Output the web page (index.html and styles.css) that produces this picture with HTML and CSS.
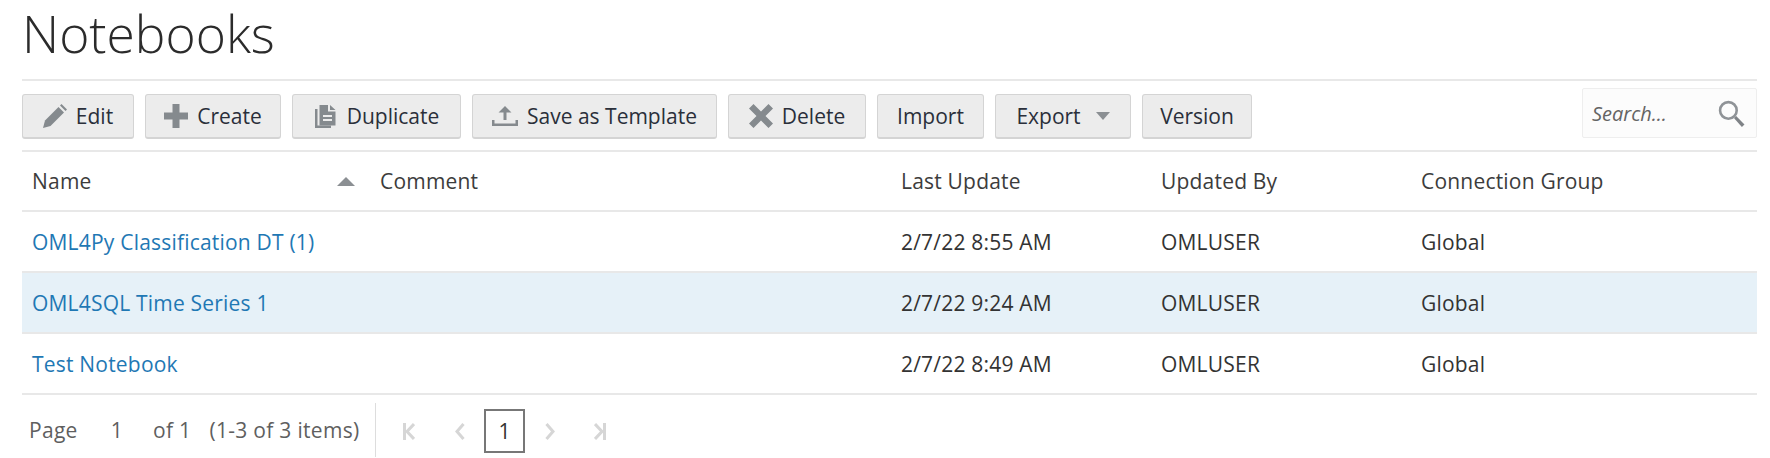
FILE: index.html
```html
<!DOCTYPE html>
<html lang="en">

<head>
    <meta charset="UTF-8">
    <title>Notebooks</title>
    <link rel="stylesheet" href="styles.css">
</head>

<body>
    <h1 class="title">Notebooks</h1>

    <div class="toolbar">
        <button class="btn btn-edit">
            <svg class="icon" viewBox="0 0 24 24"><path d="M0 24l2-7.500L15.500 3l5.500 5.500L7.500 22z"/><path d="M17 1.500L18.500 0 24 5.500 22.500 7z"/></svg>
            Edit
        </button>
        <button class="btn btn-create">
            <svg class="icon" viewBox="0 0 24 24"><path d="M8.500 0h7v8.500H24v7h-8.500V24h-7v-8.500H0v-7h8.500z"/></svg>
            Create
        </button>
        <button class="btn btn-duplicate">
            <svg class="icon" viewBox="0 0 24 24"><path d="M1 5h2.500v16.500H17V24H1z"/><path d="M5.500 1H14v6.500h7.500v14h-16zM16 1l5.500 5H16zM9 11v2h9v-2zM9 15v2h9v-2z" fill-rule="evenodd"/></svg>
            Duplicate
        </button>
        <button class="btn btn-template">
            <svg class="icon icon-upload" viewBox="0 0 26 20"><path d="M13 0l6.500 6.500h-5V14h-3V6.500h-5zM0 14h2.500v3.500h21V14H26v6H0z"/></svg>
            Save as Template
        </button>
        <button class="btn btn-delete">
            <svg class="icon" viewBox="0 0 24 24"><path d="M4.500 0L12 7.500 19.500 0 24 4.500 16.500 12l7.500 7.500-4.500 4.500-7.500-7.500L4.500 24 0 19.500 7.500 12 0 4.500z"/></svg>
            Delete
        </button>
        <button class="btn btn-import">Import</button>
        <button class="btn btn-export">Export <span class="caret"></span></button>
        <button class="btn btn-version">Version</button>
        <div class="search">
            <span class="search-text">Search...</span>
            <svg class="search-icon" viewBox="0 0 26 26"><circle cx="10" cy="10" r="8" fill="none" stroke="#8f9397" stroke-width="2.500"/><path d="M15.500 17.500l2-2 8 8-2.500 2.500z" fill="#7f8387"/></svg>
        </div>
    </div>

    <div class="row head">
        <div class="col-name">Name <span class="sort"></span></div>
        <div>Comment</div>
        <div>Last Update</div>
        <div>Updated By</div>
        <div>Connection Group</div>
    </div>
    <div class="row">
        <div class="col-name"><a href="#">OML4Py Classification DT (1)</a></div>
        <div></div>
        <div>2/7/22 8:55 AM</div>
        <div>OMLUSER</div>
        <div>Global</div>
    </div>
    <div class="row selected">
        <div class="col-name"><a href="#">OML4SQL Time Series 1</a></div>
        <div></div>
        <div>2/7/22 9:24 AM</div>
        <div>OMLUSER</div>
        <div>Global</div>
    </div>
    <div class="row">
        <div class="col-name"><a href="#">Test Notebook</a></div>
        <div></div>
        <div>2/7/22 8:49 AM</div>
        <div>OMLUSER</div>
        <div>Global</div>
    </div>

    <div class="pager">
        <div class="pager-info">
            <span>Page</span>
            <span class="pager-num">1</span>
            <span>of 1</span>
            <span class="pager-items">(1-3 of 3 items)</span>
        </div>
        <div class="pager-nav">
            <svg class="nav nav-first" viewBox="0 0 12 17"><path d="M1.500 0v17M11 1L4 8.500l7 7.500"/></svg>
            <svg class="nav nav-prev" viewBox="0 0 10 17"><path d="M8.500 1L2 8.500 8.500 16"/></svg>
            <span class="page-box">1</span>
            <svg class="nav nav-next" viewBox="0 0 10 17"><path d="M1.500 1L8 8.500 1.500 16"/></svg>
            <svg class="nav nav-last" viewBox="0 0 12 17"><path d="M10.500 0v17M1 1l7 7.500L1 16"/></svg>
        </div>
    </div>
</body>

</html>
```

FILE: styles.css
```css
body {
    font-family: "Open Sans", "Noto Sans", sans-serif;
    font-size: 21px;
    color: #333333;
    background-color: #ffffff;
    margin: 0;
    padding: 0 13px 0 22px;
    height: 458px;
    overflow: hidden;
    box-sizing: border-box;
}

.title {
    font-size: 51.500px;
    font-weight: 300;
    line-height: 66px;
    color: #2b2b2b;
    margin: 0;
    height: 79px;
    border-bottom: 2px solid #e8e8e8;
}

.toolbar {
    display: flex;
    align-items: flex-start;
    height: 71px;
    box-sizing: border-box;
    padding-top: 13px;
    border-bottom: 2px solid #e8e8e8;
}

.btn {
    display: flex;
    align-items: center;
    justify-content: center;
    gap: 9px;
    height: 45px;
    margin-right: 11px;
    padding: 0;
    font: inherit;
    color: #2a2f3a;
    background-color: #ececec;
    border: 1px solid #d4d4d4;
    border-bottom-width: 2px;
    border-radius: 3px;
}

.btn-edit { width: 112px; }
.btn-create { width: 136px; }
.btn-duplicate { width: 169px; }
.btn-template { width: 245px; }
.btn-delete { width: 138px; }
.btn-import { width: 107px; }
.btn-export { width: 136px; gap: 15px; }
.btn-version { width: 110px; margin-right: 0; }

.icon {
    width: 24px;
    height: 24px;
    fill: #858a8e;
}

.icon-upload {
    width: 26px;
    height: 20px;
}

.caret {
    width: 0;
    height: 0;
    border-left: 7px solid transparent;
    border-right: 7px solid transparent;
    border-top: 8px solid #8b8f93;
}

.search {
    display: flex;
    align-items: center;
    justify-content: space-between;
    width: 175px;
    height: 50px;
    margin: -6px 0 0 auto;
    padding: 0 11px 0 9px;
    box-sizing: border-box;
    background-color: #fcfcfc;
    border: 1px solid #eeeeee;
    border-radius: 2px;
}

.search-text {
    font-size: 20px;
    font-style: italic;
    color: #646464;
}

.search-icon {
    width: 27px;
    height: 27px;
}

.row {
    display: grid;
    grid-template-columns: 348px 521px 260px 260px 1fr;
    align-items: center;
    height: 61px;
    box-sizing: border-box;
    border-bottom: 2px solid #e8e8e8;
    letter-spacing: 0.2px;
}

.row > div {
    padding-left: 10px;
}

.row > .col-name {
    display: flex;
    justify-content: space-between;
    align-items: center;
    padding-right: 15px;
}

.head {
    height: 60px;
    color: #3c3c3c;
}

.selected {
    background-color: #e6f1f8;
}

.row a {
    color: #1f78b4;
    text-decoration: none;
}

.sort {
    width: 0;
    height: 0;
    border-left: 9px solid transparent;
    border-right: 9px solid transparent;
    border-bottom: 9px solid #8b8f93;
}

.pager {
    display: flex;
    align-items: flex-start;
    padding-top: 8px;
    color: #5f5f5f;
}

.pager-info {
    display: flex;
    align-items: center;
    width: 354px;
    height: 54px;
    padding-left: 7px;
    box-sizing: border-box;
    border-right: 1px solid #dddddd;
    letter-spacing: 0.3px;
}

.pager-num {
    margin: 0 30px 0 33px;
}

.pager-items {
    margin-left: 18px;
}

.pager-nav {
    display: flex;
    align-items: center;
    padding-left: 27px;
    margin-top: 6px;
}

.nav {
    height: 17px;
    fill: none;
    stroke: #d6d6d6;
    stroke-width: 3;
}

.nav-first { width: 12px; }
.nav-prev { width: 10px; margin-left: 40px; }
.nav-next { width: 10px; margin-right: 39px; }
.nav-last { width: 12px; }

.page-box {
    width: 41px;
    height: 44px;
    display: flex;
    align-items: center;
    justify-content: center;
    margin: 0 20px 0 19px;
    box-sizing: border-box;
    border: 2px solid #777777;
    color: #333333;
}
```
